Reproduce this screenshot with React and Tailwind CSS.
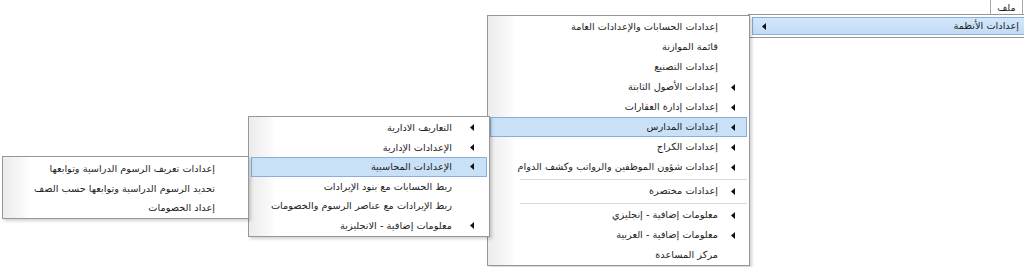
import React from 'react';

const FONT = "font-['DejaVu_Sans',sans-serif]";

const Arrow = () => (
  <svg width="4" height="7" viewBox="0 0 4 7" className="shrink-0">
    <path d="M4 0V7L0 3.5Z" fill="#111" />
  </svg>
);

const mainItems = [{ label: 'إعدادات الأنظمة', sub: true, hi: true }];

const schoolsMenu = [
  { label: 'إعدادات الحسابات والإعدادات العامة' },
  { label: 'قائمة الموازنة' },
  { label: 'إعدادات التصنيع' },
  { label: 'إعدادات الأصول الثابتة', sub: true },
  { label: 'إعدادات إدارة العقارات', sub: true },
  { label: 'إعدادات المدارس', sub: true, hi: true },
  { label: 'إعدادات الكراج', sub: true },
  { label: 'إعدادات شؤون الموظفين والرواتب وكشف الدوام', sub: true },
  { sep: true },
  { label: 'إعدادات مختصرة', sub: true },
  { sep: true },
  { label: 'معلومات إضافية - إنجليزي', sub: true },
  { label: 'معلومات إضافية - العربية', sub: true },
  { label: 'مركز المساعدة' },
];

const accountingMenu = [
  { label: 'التعاريف الادارية', sub: true },
  { label: 'الإعدادات الإدارية', sub: true },
  { label: 'الإعدادات المحاسبية', sub: true, hi: true },
  { label: 'ربط الحسابات مع بنود الإيرادات' },
  { label: 'ربط الإيرادات مع عناصر الرسوم والخصومات' },
  { label: 'معلومات إضافية - الانجليزية', sub: true },
];

const feesMenu = [
  { label: 'إعدادات تعريف الرسوم الدراسية وتوابعها' },
  { label: 'تحديد الرسوم الدراسية وتوابعها حسب الصف' },
  { label: 'إعداد الخصومات' },
];

// one row of a cascading menu; text is right aligned, the ◄ sits in the right gutter
const Row = ({ item, rowClass, gutterClass }) => {
  if (item.sep) {
    return (
      <div className="h-[4px] flex items-center pl-[30px]">
        <div className="h-px w-full bg-[#d7d7d7]" />
      </div>
    );
  }
  return (
    <div
      className={`${rowClass} flex items-center justify-end border ${
        item.hi ? 'bg-[#c9e1f7] border-[#88afdc]' : 'border-transparent'
      }`}
    >
      <span dir="rtl" className="whitespace-nowrap leading-none">
        {item.label}
      </span>
      <div className={`${gutterClass} flex justify-end`}>{item.sub && <Arrow />}</div>
    </div>
  );
};

const Menu = ({ items, className, rowClass, gutterClass }) => (
  <div
    className={`absolute ${className} border border-[#979797] bg-[linear-gradient(90deg,#ececec_0px,#f8f8f8_20px,#ffffff_27px)] shadow-[2px_2px_3px_rgba(0,0,0,0.18)] flex flex-col`}
  >
    {items.map((item, i) => (
      <Row key={i} item={item} rowClass={rowClass} gutterClass={gutterClass} />
    ))}
  </div>
);

export default function App() {
  return (
    <div className={`relative w-[1024px] h-[267px] bg-white overflow-hidden text-[9.75px] text-[#1e1e1e] ${FONT}`}>
      {/* menubar item */}
      <div className="absolute top-0 right-[1px] w-[33px] h-[15px] border-x border-[#a7a7a7] flex items-center justify-center">
        <span dir="rtl" className="leading-none">ملف</span>
      </div>

      {/* top level drop down */}
      <div className="absolute left-[748px] top-[14px] w-[300px] h-[24px] border border-[#979797] bg-white px-[3px] pt-[2px]">
        <div className="h-[18px] flex items-center justify-between border border-[#88afdc] bg-[linear-gradient(#d3e7fa,#c1dbf5)] pl-[9px] pr-[24px]">
          <Arrow />
          <span dir="rtl" className="whitespace-nowrap leading-none">{mainItems[0].label}</span>
        </div>
      </div>

      <Menu
        items={schoolsMenu}
        className="left-[487px] top-[15px] w-[263px] h-[251px] px-[2px] pt-[1px]"
        rowClass="h-[20px]"
        gutterClass="w-[28px] pr-[11px]"
      />

      <Menu
        items={accountingMenu}
        className="left-[248px] top-[116px] w-[242px] h-[121px] px-[2px] pt-[1px]"
        rowClass="h-[19.6px]"
        gutterClass="w-[34px] pr-[12px]"
      />

      <Menu
        items={feesMenu}
        className="left-[2px] top-[156px] w-[247px] h-[63px] px-[2px] pt-[2px]"
        rowClass="h-[19.6px]"
        gutterClass="w-[30px]"
      />
    </div>
  );
}
